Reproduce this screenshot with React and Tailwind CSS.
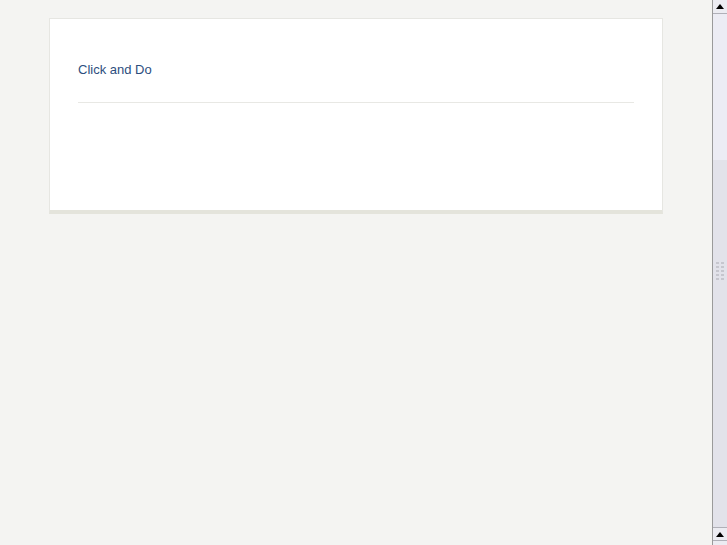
import React from 'react';

function Scrollbar() {
  return (
    <div className="flex w-[15px] flex-col border-l border-[#9a9a9a] bg-[#dcdce4]">
      <div className="flex h-[14px] items-center justify-center border-b border-[#b0b0b8] bg-[#ececf2]">
        <div className="h-0 w-0 border-x-[4px] border-b-[5px] border-x-transparent border-b-black" />
      </div>
      <div className="flex flex-1 items-center justify-center bg-[linear-gradient(to_bottom,#ececf4_146px,#e2e2ea_146px)]">
        <div className="grid grid-cols-2 gap-x-[2px] gap-y-[2px]">
          {Array.from({ length: 10 }).map((_, i) => (
            <div key={i} className="h-[2px] w-[3px] bg-[#c6c6ce]" />
          ))}
        </div>
      </div>
      <div className="flex h-[14px] items-center justify-center border-y border-[#b0b0b8] bg-[#ececf2]">
        <div className="h-0 w-0 border-x-[4px] border-b-[5px] border-x-transparent border-b-black" />
      </div>
      <div className="h-[4px] bg-[#ececf2]" />
    </div>
  );
}

export default function App() {
  return (
    <div className="flex h-screen bg-[#f4f4f2] font-['Liberation_Sans',Arial,sans-serif]">
      <div className="flex-1 pl-[49px] pt-[18px] pr-[49px]">
        <div className="w-[614px] border-t border-l border-r border-[#e6e6e2] border-b-[4px] border-b-[#e4e4dc] bg-white px-[28px] pb-[107px] pt-[41px]">
          <h1 className="text-[13px] font-normal text-[#2d4e7e]">Click and Do</h1>
          <div className="mt-[22px] h-px bg-[#e8e8e4]" />
        </div>
      </div>
      <Scrollbar />
    </div>
  );
}
